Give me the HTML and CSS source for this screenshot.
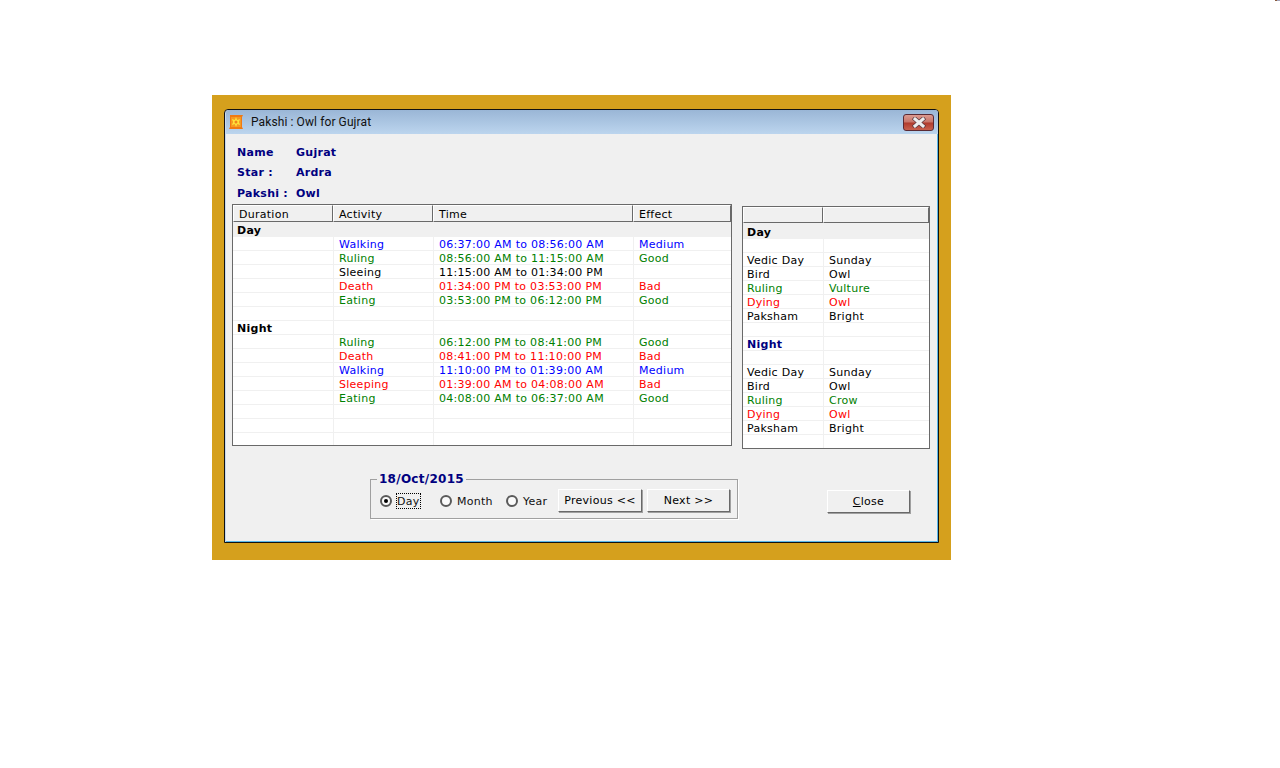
FILE: index.html
```html
<!DOCTYPE html>
<html lang="en">
<head>
	<meta charset="UTF-8">
	<title>Pakshi</title>
	<link rel="stylesheet" href="styles.css">
</head>
<body>
	<div class="corner_mark"></div>
	<div class="backdrop">
		<div class="window">
			<div class="title_bar">
				<svg class="app_icon" width="16" height="16" viewBox="0 0 16 16">
					<path d="M2 1h13l-1 2v10l1 2H1l1-2V3z" fill="#f07a12"/>
					<rect x="3" y="3" width="10" height="10" fill="#f59a22"/>
					<path d="M8 3l1.2 3 3-1-1.4 3 1.4 3-3-1L8 13l-1.200-3-3 1 1.400-3-1.400-3 3 1z" fill="#ffe23a"/>
					<circle cx="8" cy="8" r="1.500" fill="#f0851a"/>
				</svg>
				<span class="title_text">Pakshi : Owl for Gujrat</span>
				<div class="close_x">
					<svg width="16" height="11" viewBox="0 0 16 11">
						<path d="M4 2l8 7M12 2l-8 7" stroke="#5a3a40" stroke-width="4.400" stroke-linecap="square"/>
						<path d="M4 2l8 7M12 2l-8 7" stroke="#eeeeee" stroke-width="3" stroke-linecap="square"/>
					</svg>
				</div>
			</div>
			<div class="content">
				<div class="info">
					<span>Name</span><span>Gujrat</span>
					<span>Star :</span><span>Ardra</span>
					<span>Pakshi :</span><span>Owl</span>
				</div>
				<div class="tables">
					<div class="grid_box main_grid">
						<table>
							<colgroup><col class="c_duration"><col class="c_activity"><col class="c_time"><col></colgroup>
							<tr class="head"><th>Duration</th><th>Activity</th><th>Time</th><th>Effect</th></tr>
							<tr class="section"><td>Day</td><td></td><td></td><td></td></tr>
							<tr class="blue"><td></td><td>Walking</td><td>06:37:00 AM to 08:56:00 AM</td><td>Medium</td></tr>
							<tr class="green"><td></td><td>Ruling</td><td>08:56:00 AM to 11:15:00 AM</td><td>Good</td></tr>
							<tr><td></td><td>Sleeing</td><td>11:15:00 AM to 01:34:00 PM</td><td></td></tr>
							<tr class="red"><td></td><td>Death</td><td>01:34:00 PM to 03:53:00 PM</td><td>Bad</td></tr>
							<tr class="green"><td></td><td>Eating</td><td>03:53:00 PM to 06:12:00 PM</td><td>Good</td></tr>
							<tr><td></td><td></td><td></td><td></td></tr>
							<tr><td class="bold">Night</td><td></td><td></td><td></td></tr>
							<tr class="green"><td></td><td>Ruling</td><td>06:12:00 PM to 08:41:00 PM</td><td>Good</td></tr>
							<tr class="red"><td></td><td>Death</td><td>08:41:00 PM to 11:10:00 PM</td><td>Bad</td></tr>
							<tr class="blue"><td></td><td>Walking</td><td>11:10:00 PM to 01:39:00 AM</td><td>Medium</td></tr>
							<tr class="red"><td></td><td>Sleeping</td><td>01:39:00 AM to 04:08:00 AM</td><td>Bad</td></tr>
							<tr class="green"><td></td><td>Eating</td><td>04:08:00 AM to 06:37:00 AM</td><td>Good</td></tr>
							<tr><td></td><td></td><td></td><td></td></tr>
							<tr><td></td><td></td><td></td><td></td></tr>
							<tr class="last"><td></td><td></td><td></td><td></td></tr>
						</table>
					</div>
					<div class="grid_box side_grid">
						<table>
							<colgroup><col class="c_side"><col></colgroup>
							<tr class="head"><th></th><th></th></tr>
							<tr class="section"><td>Day</td><td></td></tr>
							<tr><td></td><td></td></tr>
							<tr><td>Vedic Day</td><td>Sunday</td></tr>
							<tr><td>Bird</td><td>Owl</td></tr>
							<tr class="green"><td>Ruling</td><td>Vulture</td></tr>
							<tr class="red"><td>Dying</td><td>Owl</td></tr>
							<tr><td>Paksham</td><td>Bright</td></tr>
							<tr><td></td><td></td></tr>
							<tr><td class="bold navy">Night</td><td></td></tr>
							<tr><td></td><td></td></tr>
							<tr><td>Vedic Day</td><td>Sunday</td></tr>
							<tr><td>Bird</td><td>Owl</td></tr>
							<tr class="green"><td>Ruling</td><td>Crow</td></tr>
							<tr class="red"><td>Dying</td><td>Owl</td></tr>
							<tr><td>Paksham</td><td>Bright</td></tr>
							<tr class="last"><td></td><td></td></tr>
						</table>
					</div>
				</div>
				<div class="bottom_row">
					<fieldset class="date_group">
						<legend>18/Oct/2015</legend>
						<div class="radio day checked"><i></i><span class="focus">Day</span></div>
						<div class="radio month"><i></i><span>Month</span></div>
						<div class="radio year"><i></i><span>Year</span></div>
						<div class="btn prev">Previous &lt;&lt;</div>
						<div class="btn next">Next &gt;&gt;</div>
					</fieldset>
					<div class="btn close_btn"><u>C</u>lose</div>
				</div>
			</div>
		</div>
	</div>
</body>
</html>
```
FILE: styles.css
```css
*{
	margin: 0;
	padding: 0;
	box-sizing: border-box;
}
body{
	background-color: #fff;
	font-family: "DejaVu Sans", Verdana, sans-serif;
	font-size: 11px;
	letter-spacing: 0.270px;
	color: #000;
}
.corner_mark{
	position: absolute;
	top: 0;
	right: 0;
	width: 5px;
	height: 1px;
	background: linear-gradient(to right, #8a5a3a 40%, #a0a0b8 40%);
}
.backdrop{
	width: 739px;
	height: 465px;
	margin: 95px 0 0 212px;
	padding: 14px 12px 17px 12px;
	background-color: #d5a01d;
}
.window{
	height: 100%;
	display: flex;
	flex-direction: column;
	border: 1px solid #111;
	border-radius: 4px 4px 0 0;
	background-color: #c5d8f0;
	padding: 0 0 0 1px;
}
.title_bar{
	display: flex;
	align-items: center;
	height: 24px;
	flex-shrink: 0;
	padding: 0 4px 0 2px;
	background: linear-gradient(to bottom, #9ab6d6, #bcd5ee);
	border-radius: 3px 3px 0 0;
}
.app_icon{
	margin-right: 7px;
}
.title_text{
	flex: 1;
	font-family: Roboto, sans-serif;
	font-size: 12px;
	letter-spacing: 0.100px;
	color: #111;
}
.close_x{
	display: flex;
	align-items: center;
	justify-content: center;
	width: 31px;
	height: 17px;
	border: 1px solid #5a2a34;
	border-radius: 3px;
	background: linear-gradient(to bottom, #dc9a90 0%, #c77468 48%, #b03a2c 52%, #c9614e 100%);
}
.content{
	flex: 1;
	background-color: #f0f0f0;
	padding: 8px 7px 0 6px;
	border-right: 1px solid #5ab8e8;
	border-bottom: 1px solid #5ab8e8;
}
.info{
	display: grid;
	grid-template-columns: 59px auto;
	grid-auto-rows: 20.500px;
	justify-content: start;
	align-items: center;
	padding-left: 5px;
	font-weight: bold;
	color: #000080;
}
.tables{
	display: flex;
	align-items: flex-start;
	gap: 10px;
}
.grid_box{
	border: 1px solid #696969;
	background-color: #fff;
	overflow: hidden;
}
.main_grid{
	width: 500px;
	height: 242px;
}
.side_grid{
	width: 188px;
	height: 243px;
	margin-top: 2px;
}
table{
	width: 100%;
	table-layout: fixed;
	border-collapse: separate;
	border-spacing: 0;
}
.c_duration{
	width: 100px;
}
.c_activity{
	width: 100px;
}
.c_time{
	width: 200px;
}
.c_side{
	width: 80px;
}
th{
	height: 17px;
	padding: 3px 0 0 5px;
	line-height: 11px;
	vertical-align: top;
	font-weight: normal;
	text-align: left;
	background-color: #f0f0f0;
	border: 1px solid;
	border-color: #fff #696969 #696969 #fff;
}
.side_grid th{
	height: 16px;
}
td{
	height: 14px;
	padding: 2px 0 0 5px;
	line-height: 11px;
	vertical-align: top;
	white-space: nowrap;
	border-bottom: 1px solid #f0f0f0;
	border-left: 1px solid #f0f0f0;
}
td:first-child{
	padding-left: 4px;
	border-left: 0;
}
.last td{
	border-bottom: 0;
}
.section td{
	height: 15px;
	padding-top: 3px;
	background-color: #f0f0f0;
	font-weight: bold;
	border-color: #f0f0f0;
}
.side_grid .section td{
	height: 16px;
	padding-top: 4px;
}
.bold{
	font-weight: bold;
}
.navy{
	color: #000080;
}
.blue{
	color: #0000ff;
}
.green{
	color: #008000;
}
.red{
	color: #ff0000;
}
.bottom_row{
	display: flex;
	align-items: flex-start;
	margin-top: 24px;
	padding-left: 138px;
}
.date_group{
	display: flex;
	align-items: center;
	width: 367px;
	height: 46px;
	padding: 0 7px 2px 6px;
	border: 1px solid #a0a0a0;
	box-shadow: 1px 1px 0 #fff;
}
.date_group legend{
	padding: 0 2px 0 2px;
	font-size: 12px;
	font-weight: bold;
	color: #000080;
	line-height: 13px;
}
.radio{
	display: flex;
	align-items: center;
	gap: 5px;
}
.radio i{
	display: block;
	position: relative;
	width: 12px;
	height: 12px;
	border: 2px solid #5a5a5a;
	border-radius: 50%;
	background-color: #fafafa;
}
.radio.checked i::after{
	content: "";
	position: absolute;
	top: 2px;
	left: 2px;
	width: 4px;
	height: 4px;
	border-radius: 50%;
	background-color: #000;
}
.radio span{
	color: #111;
	padding-top: 1px;
}
.day{
	width: 60px;
	margin-left: 3px;
}
.month{
	width: 66px;
}
.year{
	width: 52px;
}
.focus{
	outline: 1px dotted #000;
}
.btn{
	display: flex;
	align-items: center;
	justify-content: center;
	width: 84px;
	height: 23px;
	background-color: #f0f0f0;
	border: 1px solid;
	border-color: #fff #696969 #696969 #fff;
	box-shadow: 1px 1px 0 #a0a0a0;
}
.prev{
	margin-right: 5px;
}
.next{
	width: 83px;
}
.close_btn{
	width: 83px;
	margin: 17px 0 0 89px;
}
```
